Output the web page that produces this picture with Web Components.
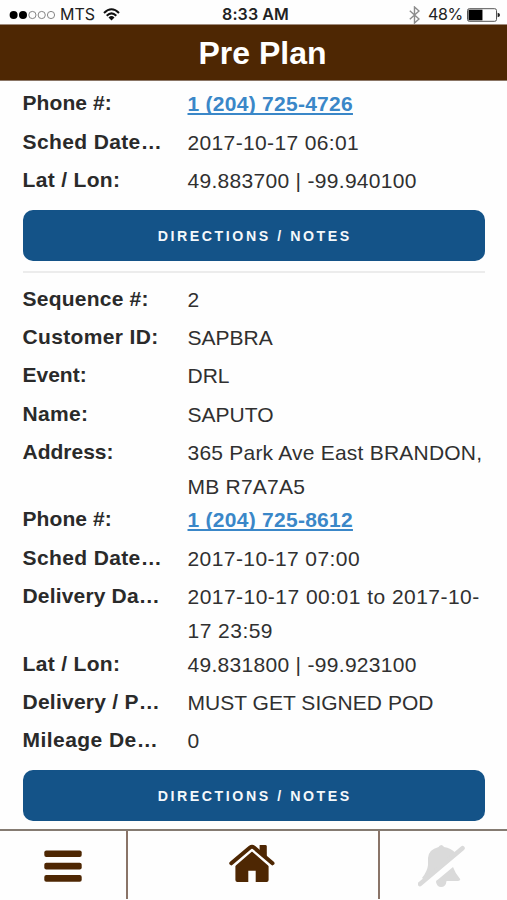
<!DOCTYPE html>
<html lang="en">
<head>
<meta charset="utf-8">
<title>Pre Plan</title>
<style>
    html, body {
        margin: 0;
        height: 100%;
    }
    body {
        font-family: "Liberation Sans", Arial, sans-serif;
        background: #fefefe;
        color: #303030;
        overflow: hidden;
    }
</style>
</head>
<body>
<plan-app>
    <status-bar slot="status" carrier="MTS" time="8:33 AM" battery="48"></status-bar>
    <title-bar slot="title">Pre Plan</title-bar>

    <stop-card>
        <stop-field label="Phone #:" ls="0.08" vls="0.27"><a href="#">1 (204) 725-4726</a></stop-field>
        <stop-field label="Sched Date…" ls="0.38" vls="0.36">2017-10-17 06:01</stop-field>
        <stop-field label="Lat / Lon:" ls="0.33" vls="0.3">49.883700 | -99.940100</stop-field>
    </stop-card>

    <stop-card>
        <stop-field label="Sequence #:" ls="0.23">2</stop-field>
        <stop-field label="Customer ID:" ls="0.35">SAPBRA</stop-field>
        <stop-field label="Event:">DRL</stop-field>
        <stop-field label="Name:" ls="0.3">SAPUTO</stop-field>
        <stop-field label="Address:" vls="0.22">365 Park Ave East BRANDON,<br>MB R7A7A5</stop-field>
        <stop-field label="Phone #:" ls="0.08" vls="0.27"><a href="#">1 (204) 725-8612</a></stop-field>
        <stop-field label="Sched Date…" ls="0.38" vls="0.42">2017-10-17 07:00</stop-field>
        <stop-field label="Delivery Da…" ls="0.17" vls="0.47">2017-10-17 00:01 to 2017-10-<br>17 23:59</stop-field>
        <stop-field label="Lat / Lon:" ls="0.33" vls="0.3">49.831800 | -99.923100</stop-field>
        <stop-field label="Delivery / P…" ls="0.25" vls="0.03">MUST GET SIGNED POD</stop-field>
        <stop-field label="Mileage De…" ls="0.45">0</stop-field>
    </stop-card>

    <tab-bar slot="tabs"></tab-bar>
</plan-app>

<script>
class PlanApp extends HTMLElement {
    constructor() {
        super();
        this.attachShadow({ mode: "open" });
    }

    connectedCallback() {
        this.shadowRoot.innerHTML = `
            <style>
                :host {
                    display: flex;
                    flex-direction: column;
                    height: 900px;
                }
                main {
                    flex: 1;
                    min-height: 0;
                    overflow: hidden;
                    padding: 5.4px 22px 0 22.5px;
                }
            </style>
            <slot name="status"></slot>
            <slot name="title"></slot>
            <main><slot></slot></main>
            <slot name="tabs"></slot>
        `;
    }
}

class StatusBar extends HTMLElement {
    constructor() {
        super();
        this.attachShadow({ mode: "open" });
    }

    connectedCallback() {
        const level = Number(this.getAttribute("battery"));
        this.shadowRoot.innerHTML = `
            <style>
                :host {
                    display: grid;
                    grid-template-columns: 1fr auto 1fr;
                    align-items: center;
                    height: 24px;
                    padding: 5px 7px 0 9px;
                    box-sizing: border-box;
                    font-family: Inter, "Liberation Sans", sans-serif;
                    font-size: 16px;
                    line-height: 19px;
                    color: #222;
                }
                .left, .right { display: flex; align-items: center; }
                .right { justify-content: flex-end; }
                .carrier { margin: 0 8px 0 4px; }
                .time { font-weight: 600; letter-spacing: 0.1px; padding-left: 2px; }
                .level { margin: 0 4px 0 8px; letter-spacing: -0.3px; }
                svg { display: block; flex: none; }
            </style>
            <div class="left">
                <svg width="47" height="10" viewBox="0 0 47 10">
                    <circle cx="4.6" cy="5" r="4" fill="#000"/>
                    <circle cx="14" cy="5" r="4" fill="#000"/>
                    <g fill="none" stroke="#777" stroke-width="0.9">
                        <circle cx="23.4" cy="5" r="3.6"/>
                        <circle cx="32.7" cy="5" r="3.6"/>
                        <circle cx="42" cy="5" r="3.6"/>
                    </g>
                </svg>
                <span class="carrier">${this.getAttribute("carrier")}</span>
                <svg width="17" height="13" viewBox="0 0 17 13">
                    <g fill="none" stroke="#111" stroke-width="2">
                        <path d="M1 5 Q8.5 -2.4 16 5"/>
                        <path d="M3.7 7.7 Q8.5 3 13.3 7.7"/>
                    </g>
                    <path d="M5.5 9.4 Q8.5 6.8 11.5 9.4 L8.5 12.5Z" fill="#111"/>
                </svg>
            </div>
            <span class="time">${this.getAttribute("time")}</span>
            <div class="right">
                <svg width="11" height="18" viewBox="0 0 11 18">
                    <path d="M0.8 4.8 L10 13 L5.5 17 V1 L10 5 L0.8 13.2" fill="none" stroke="#8c8c8c" stroke-width="1.4"/>
                </svg>
                <span class="level">${level}%</span>
                <svg width="33" height="14" viewBox="0 0 33 14">
                    <rect x="0.5" y="0.7" width="29" height="12.6" rx="1.8" fill="#fff" stroke="#555"/>
                    <rect x="1.5" y="1.7" width="${27 * level / 100 + 1}" height="10.6" fill="#000"/>
                    <path d="M30.6 4.8 Q33 5.2 33 7 Q33 8.8 30.6 9.2Z" fill="#222"/>
                </svg>
            </div>
        `;
    }
}

class TitleBar extends HTMLElement {
    constructor() {
        super();
        this.attachShadow({ mode: "open" });
    }

    connectedCallback() {
        this.shadowRoot.innerHTML = `
            <style>
                :host {
                    display: flex;
                    justify-content: center;
                    align-items: center;
                    height: 57px;
                    box-sizing: border-box;
                    border-top: 1px solid #a08c7e;
                    border-bottom: 1px solid #8a7565;
                    padding: 2px 0 0 18px;
                    background: #4e2703;
                    color: #fff;
                    font-size: 32px;
                    font-weight: bold;
                }
            </style>
            <slot></slot>
        `;
    }
}

class StopField extends HTMLElement {
    constructor() {
        super();
        this.attachShadow({ mode: "open" });
    }

    connectedCallback() {
        const ls = this.getAttribute("ls") || 0;
        const vls = this.getAttribute("vls") || 0;
        this.shadowRoot.innerHTML = `
            <style>
                :host {
                    display: grid;
                    grid-template-columns: 165px 1fr;
                    min-height: 38.25px;
                    font-size: 21px;
                    line-height: 33.8px;
                }
                .label {
                    font-weight: bold;
                    color: #2a2a2a;
                    letter-spacing: ${ls}px;
                    white-space: nowrap;
                }
                .value {
                    padding-top: 1px;
                    margin-bottom: -1px;
                    letter-spacing: ${vls}px;
                    white-space: nowrap;
                }
                ::slotted(a) {
                    color: #3a87c8;
                    font-weight: bold;
                    text-decoration-thickness: 2px;
                    text-underline-offset: 2px;
                    text-decoration-skip-ink: none;
                }
            </style>
            <div class="label">${this.getAttribute("label")}</div>
            <div class="value"><slot></slot></div>
        `;
    }
}

class StopCard extends HTMLElement {
    constructor() {
        super();
        this.attachShadow({ mode: "open" });
    }

    connectedCallback() {
        this.shadowRoot.innerHTML = `
            <style>
                :host {
                    display: block;
                    padding-bottom: 9.6px;
                    margin-bottom: 9.3px;
                    border-bottom: 2px solid #ececec;
                }
                button {
                    display: block;
                    width: 100%;
                    height: 51.2px;
                    margin: 8.6px 0 0;
                    padding: 2px 0 0 2px;
                    border: 0;
                    border-radius: 10px;
                    background: #145388;
                    color: #f4f8fb;
                    font: bold 14.2px "Liberation Sans", Arial, sans-serif;
                    letter-spacing: 2.55px;
                }
            </style>
            <slot></slot>
            <button>DIRECTIONS / NOTES</button>
        `;
    }
}

class TabBar extends HTMLElement {
    constructor() {
        super();
        this.attachShadow({ mode: "open" });
    }

    connectedCallback() {
        this.shadowRoot.innerHTML = `
            <style>
                :host {
                    display: grid;
                    grid-template-columns: 128px 1fr 129px;
                    height: 71px;
                    box-sizing: border-box;
                    border-top: 2px solid #857b72;
                    background: #fefefe;
                }
                .tab {
                    display: flex;
                    justify-content: center;
                    height: 68px;
                    box-sizing: border-box;
                }
                .menu { border-right: 2px solid #8a7468; }
                .home { padding-right: 3px; }
                .alerts { border-left: 2px solid #8a7468; padding-right: 1px; }
                svg { display: block; }
            </style>
            <div class="tab menu">
                <svg width="38" height="68" viewBox="0 0 38 68" fill="#4e2703">
                    <rect x="0.3" y="19.4" width="37.4" height="6.6" rx="2"/>
                    <rect x="0.3" y="31.8" width="37.4" height="6.6" rx="2"/>
                    <rect x="0.3" y="44.1" width="37.4" height="6.6" rx="2"/>
                </svg>
            </div>
            <div class="tab home">
                <svg width="48" height="68" viewBox="0 0 48 68" fill="#4e2703">
                    <path d="M24 18.5 L40.6 31.5 V49 Q40.6 51 38.6 51 H27.7 V39.7 H20.3 V51 H9.4 Q7.4 51 7.4 49 V31.5Z"/>
                    <path d="M3.5 33.6 L22 17.6 Q24 16 26 17.6 L44.4 33.6" fill="none" stroke="#fefefe" stroke-width="7"/>
                    <path d="M3.3 32.3 L22 16.5 Q24 14.9 26 16.5 L44.5 32.3" fill="none" stroke="#4e2703" stroke-width="4" stroke-linecap="round"/>
                    <path d="M31.6 14 H37.4 Q38.8 14 38.8 15.4 V27 L31.6 21Z"/>
                </svg>
            </div>
            <div class="tab alerts">
                <svg width="50" height="68" viewBox="0 0 50 68" fill="#dadada">
                    <path d="M23.3 14 Q25.3 14.4 26 16 Q33 17 37 21.5 L7 49 L4 47 Q9.5 40 10 34 V27 Q10.5 18.5 20.6 16 Q21.3 14.4 23.3 14Z"/>
                    <path d="M35 36 Q37 42 42.3 48.3 Q42 50 40 50 H28.5 Q28 56 23 56 Q19 56 18 51 Q17.5 49.5 20 48.5Z"/>
                    <path d="M2 53 L44.5 17.3" fill="none" stroke="#dadada" stroke-width="4.6" stroke-linecap="round"/>
                </svg>
            </div>
        `;
    }
}

customElements.define("plan-app", PlanApp);
customElements.define("status-bar", StatusBar);
customElements.define("title-bar", TitleBar);
customElements.define("stop-field", StopField);
customElements.define("stop-card", StopCard);
customElements.define("tab-bar", TabBar);
</script>
</body>
</html>
